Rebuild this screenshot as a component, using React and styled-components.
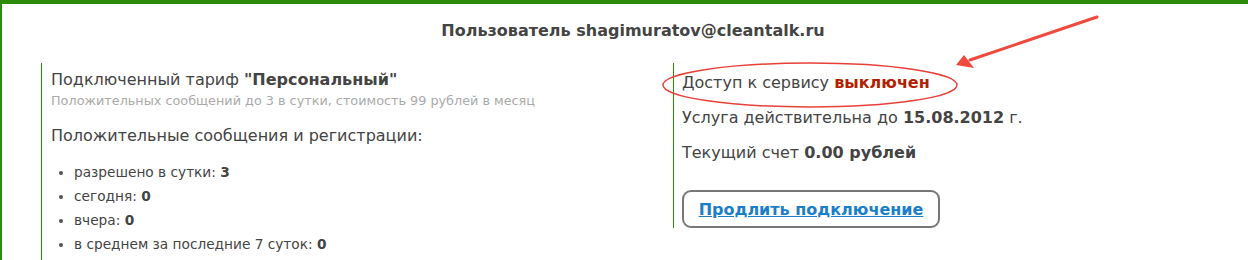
import React from "react";
import styled, { createGlobalStyle } from "styled-components";

const Global = createGlobalStyle`
  html, body { margin: 0; padding: 0; background: #fff; }
  body { font-family: "DejaVu Sans", Verdana, sans-serif; color: #444; }
`;

const Page = styled.div`
  position: relative;
  height: 256px;
  border-top: 4px solid #2a8c0a;
  border-left: 2px solid #2a8c0a;
  overflow: hidden;
`;

const Title = styled.h1`
  margin: 0;
  padding-top: 17px;
  width: 1262px;
  text-align: center;
  font-size: 16px;
  line-height: 20px;
  font-weight: bold;
  color: #444;
`;

const Columns = styled.div`
  display: grid;
  grid-template-columns: 632px 540px;
  margin: 22px 0 0 39px;
  align-items: start;
`;

const Column = styled.div`
  border-left: 1px solid #2a8c0a;
  padding-left: ${(p) => p.$pad}px;
  padding-top: ${(p) => p.$top}px;
  min-height: ${(p) => p.$min}px;
`;

const Tariff = styled.div`
  font-size: 16px;
  line-height: 20px;
`;

const Note = styled.div`
  margin-top: 3px;
  font-size: 12.8px;
  line-height: 16px;
  color: #aaa;
`;

const Heading = styled.div`
  font-size: 16px;
  line-height: 20px;
  margin-top: 17px;
`;

const List = styled.ul`
  margin: 14px 0 0;
  padding-left: 23px;
  font-size: 13.7px;
  line-height: 24px;
  li::marker { color: #555; }
`;

const Line = styled.div`
  font-size: 16px;
  line-height: 20px;
  margin-bottom: 15px;
`;

const Off = styled.b`
  color: #b31e00;
`;

const Renew = styled.a`
  display: inline-flex;
  justify-content: center;
  align-items: center;
  box-sizing: border-box;
  width: 258px;
  height: 38px;
  margin-top: 12px;
  border: 2px solid #777;
  border-radius: 9px;
  color: #1a7ec8;
  font-size: 16px;
  font-weight: bold;
  text-decoration: underline;
  cursor: pointer;
`;

const Overlay = styled.svg`
  position: absolute;
  left: -2px;
  top: -4px;
  pointer-events: none;
`;

export default function App() {
  return (
    <>
      <Global />
      <Page>
        <Title>Пользователь shagimuratov@cleantalk.ru</Title>
        <Columns>
          <Column $pad={9} $top={7} $min={200}>
            <Tariff>
              Подключенный тариф <b>"Персональный"</b>
            </Tariff>
            <Note>Положительных сообщений до 3 в сутки, стоимость 99 рублей в месяц</Note>
            <Heading>Положительные сообщения и регистрации:</Heading>
            <List>
              <li>разрешено в сутки: <b>3</b></li>
              <li>сегодня: <b>0</b></li>
              <li>вчера: <b>0</b></li>
              <li>в среднем за последние 7 суток: <b>0</b></li>
            </List>
          </Column>
          <Column $pad={8} $top={10} $min={154}>
            <Line>
              Доступ к сервису <Off>выключен</Off>
            </Line>
            <Line>
              Услуга действительна до <b>15.08.2012</b> г.
            </Line>
            <Line>
              Текущий счет <b>0.00 рублей</b>
            </Line>
            <Renew>Продлить подключение</Renew>
          </Column>
        </Columns>
        <Overlay width="1248" height="260" viewBox="0 0 1248 260">
          <ellipse cx="810" cy="85" rx="147" ry="22" fill="none" stroke="#e8403a" strokeWidth="1.5" />
          <line x1="1097" y1="17" x2="970" y2="60" stroke="#f04a3f" strokeWidth="3" strokeLinecap="round" />
          <polygon points="956,65 964,55 974,68" fill="#f04a3f" />
        </Overlay>
      </Page>
    </>
  );
}
